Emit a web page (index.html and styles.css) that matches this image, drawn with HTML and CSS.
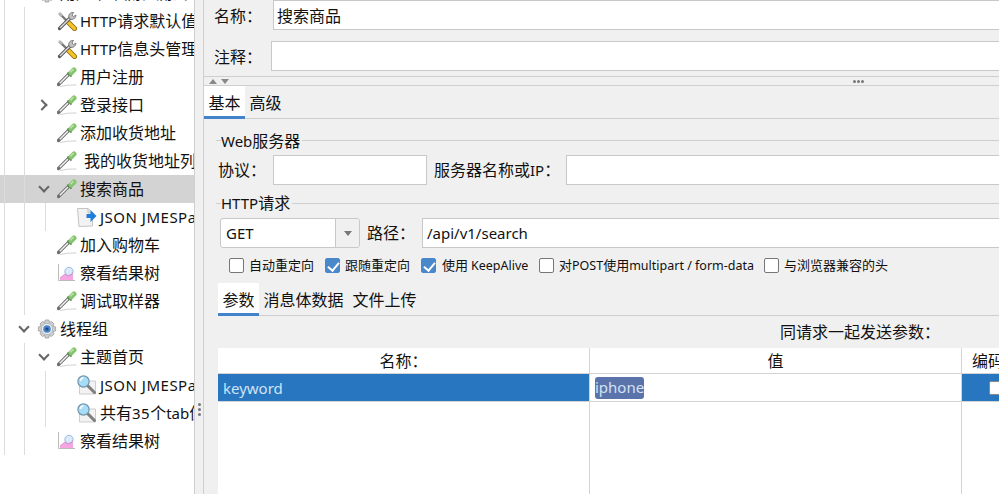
FILE: index.html
```html
<!DOCTYPE html>
<html lang="zh-CN">
<head>
<meta charset="utf-8">
<title>搜索商品</title>
<link rel="stylesheet" href="styles.css">
</head>
<body>
<svg class="defs" width="0" height="0" aria-hidden="true">
  <symbol id="i-drop" viewBox="0 0 20 20">
    <path d="M3 19.5Q10 17.6 19.5 18" fill="none" stroke="#d0d0d0" stroke-width="1"/>
    <path d="M1.5 17.5L11 8" stroke="#6e6e6e" stroke-width="3.2" stroke-linecap="round"/>
    <path d="M2.8 16.2L11 8" stroke="#f2f2f2" stroke-width="1.5"/>
    <path d="M10.5 5.5L14.5 9.5" stroke="#4f7d48" stroke-width="1.8"/>
    <path d="M14 6L17 3" stroke="#86c56e" stroke-width="5" stroke-linecap="round"/>
    <path d="M14 4.8L16.2 2.4" stroke="#c0e6ae" stroke-width="1.4" stroke-linecap="round"/>
  </symbol>
  <symbol id="i-tools" viewBox="0 0 20 20">
    <path d="M3 3L11 11" stroke="#777" stroke-width="2.4"/>
    <path d="M2 2L5 5" stroke="#b4b4b4" stroke-width="3"/>
    <path d="M11 11L17.5 17.5" stroke="#8a6a10" stroke-width="5" stroke-linecap="round"/>
    <path d="M11 11L17.5 17.5" stroke="#f5c423" stroke-width="3.2" stroke-linecap="round"/>
    <path d="M2.5 17.5L13 7" stroke="#555" stroke-width="3.2" stroke-linecap="round"/>
    <path d="M3 17L13 7" stroke="#dedede" stroke-width="1.4"/>
    <path d="M16.5 1.5A4 4 0 0 0 12 7L14 8.5A4.5 4.5 0 0 0 19 4L16.5 5.5L15 4Z" fill="#c0c0c0" stroke="#6a6a6a" stroke-width=".8"/>
  </symbol>
  <symbol id="i-chart" viewBox="0 0 20 20">
    <path d="M1.5 1V17.5H18" fill="none" stroke="#bcbcbc"/>
    <path d="M3 17V15L8 11L11 13L16 10V17Z" fill="#f6a6e0"/>
    <circle cx="12" cy="8.5" r="4.2" fill="#dce9f8" stroke="#8fb4dc" stroke-width=".9"/>
    <path d="M3 15L8 11L11 13L16 10" fill="none" stroke="#d884c4" stroke-width=".8"/>
  </symbol>
  <symbol id="i-gear" viewBox="0 0 20 20">
    <path d="M8.2 1H11.8L12.3 3.6L14.4 2.4L17 5L15.8 7.1L18.6 7.9V11.9L15.8 12.6L17 14.9L14.4 17.5L12.3 16.3L11.8 19H8.2L7.7 16.3L5.6 17.5L3 14.9L4.2 12.6L1.4 11.9V7.9L4.2 7.1L3 5L5.6 2.4L7.7 3.6Z" fill="#cfcfcf" stroke="#9a9a9a" stroke-width=".8"/>
    <circle cx="10" cy="10" r="5.6" fill="#eef1f5" stroke="#a4aebb" stroke-width=".8"/>
    <circle cx="10" cy="10" r="3.8" fill="#4a82c0"/>
    <circle cx="10" cy="10" r="1.6" fill="#1a4c8a"/>
  </symbol>
  <symbol id="i-lens" viewBox="0 0 20 20">
    <path d="M2.5 6H18.5V19H2.5Z" fill="#f2f2f2" stroke="#cdcdcd"/>
    <path d="M11 11L17.5 17.5" stroke="#7e7e7e" stroke-width="3" stroke-linecap="round"/>
    <circle cx="6.5" cy="6.5" r="5.6" fill="#a6dcf6" stroke="#6f94ac" stroke-width="1.2"/>
    <path d="M3.4 6A3.2 3.2 0 0 1 6.5 3" fill="none" stroke="#fff" stroke-width="1.4"/>
  </symbol>
  <symbol id="i-post" viewBox="0 0 20 20">
    <path d="M.5 1.5H11L15.5 6V19L2 19.5Z" fill="#f2f2f2" stroke="#c4c4c4"/>
    <path d="M11 1.5V6H15.5" fill="#e0e0e0" stroke="#c4c4c4"/>
    <path d="M9.5 7H13.5V3L19.5 9L13.5 15V11H9.5Z" fill="#1f7fd8"/>
  </symbol>
</svg>

<div class="app">
  <nav class="tree">
    <div class="rootline">
      <div class="row lv1"><svg class="ic"><use href="#i-gear"/></svg><span class="tx">用户下单流程测试</span></div>
      <div class="branch">
        <div class="row lv2"><svg class="ic"><use href="#i-tools"/></svg><span class="tx"><span class="la">HTTP</span>请求默认值</span></div>
        <div class="row lv2"><svg class="ic"><use href="#i-tools"/></svg><span class="tx"><span class="la">HTTP</span>信息头管理器</span></div>
        <div class="row lv2"><svg class="ic"><use href="#i-drop"/></svg><span class="tx">用户注册</span></div>
        <div class="row lv2"><span class="chev right"></span><svg class="ic"><use href="#i-drop"/></svg><span class="tx">登录接口</span></div>
        <div class="row lv2"><svg class="ic"><use href="#i-drop"/></svg><span class="tx">添加收货地址</span></div>
        <div class="row lv2"><svg class="ic"><use href="#i-drop"/></svg><span class="tx tx-shift">我的收货地址列表</span></div>
        <div class="row lv2 sel"><span class="chev down"></span><svg class="ic"><use href="#i-drop"/></svg><span class="tx">搜索商品</span></div>
        <div class="branch short">
          <div class="row lv3"><svg class="ic"><use href="#i-post"/></svg><span class="tx"><span class="la wide">JSON JMESPath Extractor</span></span></div>
        </div>
        <div class="row lv2"><svg class="ic"><use href="#i-drop"/></svg><span class="tx">加入购物车</span></div>
        <div class="row lv2"><svg class="ic"><use href="#i-chart"/></svg><span class="tx">察看结果树</span></div>
        <div class="row lv2"><svg class="ic"><use href="#i-drop"/></svg><span class="tx">调试取样器</span></div>
      </div>
      <div class="row lv1"><span class="chev down"></span><svg class="ic"><use href="#i-gear"/></svg><span class="tx">线程组</span></div>
      <div class="branch">
        <div class="row lv2"><span class="chev down"></span><svg class="ic"><use href="#i-drop"/></svg><span class="tx">主题首页</span></div>
        <div class="branch short">
          <div class="row lv3"><svg class="ic"><use href="#i-lens"/></svg><span class="tx"><span class="la wide">JSON JMESPath Extractor</span></span></div>
          <div class="row lv3"><svg class="ic"><use href="#i-lens"/></svg><span class="tx">共有<span class="la wide">35</span>个<span class="la">tab</span>值</span></div>
        </div>
        <div class="row lv2"><svg class="ic"><use href="#i-chart"/></svg><span class="tx">察看结果树</span></div>
      </div>
    </div>
  </nav>

  <div class="vsplit"><i></i><i></i><i></i></div>

  <main class="detail">
    <div class="namerow">
      <label class="lb lb-name">名称：</label>
      <div class="field">搜索商品</div>
    </div>
    <div class="namerow note">
      <label class="lb lb-note">注释：</label>
      <div class="field"></div>
    </div>

    <div class="hsplit">
      <span class="tri up"></span><span class="tri dn"></span>
      <span class="dots"><i></i><i></i><i></i></span>
    </div>

    <div class="tabs main-tabs">
      <span class="tab on">基本</span><span class="tab">高级</span>
    </div>

    <section class="group web">
      <div class="legend"><span><span class="la">Web</span>服务器</span></div>
      <div class="line">
        <label class="lb lb-proto">协议：</label>
        <div class="field proto"></div>
        <label class="lb lb-host">服务器名称或<span class="la">IP</span>：</label>
        <div class="field grow"></div>
      </div>
    </section>

    <section class="group http">
      <div class="legend"><span><span class="la">HTTP</span>请求</span></div>
      <div class="line req">
        <div class="combo"><span class="combo-val la">GET</span><span class="combo-btn"></span></div>
        <label class="lb lb-path">路径：</label>
        <div class="field grow path la">/api/v1/search</div>
      </div>
    </section>

    <div class="checks">
      <span class="ck c1"><span class="box"></span>自动重定向</span>
      <span class="ck c2"><span class="box on"></span>跟随重定向</span>
      <span class="ck c3"><span class="box on wider"></span>使用 <span class="la12">KeepAlive</span></span>
      <span class="ck c4"><span class="box"></span>对<span class="la12">POST</span>使用<span class="la12">multipart / form-data</span></span>
      <span class="ck c5"><span class="box"></span>与浏览器兼容的头</span>
    </div>

    <div class="tabs sub-tabs">
      <span class="tab on">参数</span><span class="tab">消息体数据</span><span class="tab">文件上传</span>
    </div>

    <div class="caption">同请求一起发送参数：</div>

    <div class="table">
      <div class="th">名称：</div>
      <div class="th">值</div>
      <div class="th last">编码？</div>
      <div class="td blue la">keyword</div>
      <div class="td"><span class="mark la">iphone</span></div>
      <div class="td blue last center"><span class="tick"></span></div>
      <div class="fill"></div>
      <div class="fill"></div>
      <div class="fill last"></div>
    </div>
  </main>
</div>
</body>
</html>
```

FILE: styles.css
```css
* { box-sizing: border-box; }
html, body { margin: 0; height: 100%; overflow: hidden; background: #f0f0f0; }
body { font: 16px/1.2 "Noto Sans CJK SC", "Noto Sans", sans-serif; color: #111; }
.defs { position: absolute; }
.la { font: 15px "Noto Sans", "Noto Sans CJK SC", sans-serif; }
.la12 { font: 12.5px "Noto Sans", "Noto Sans CJK SC", sans-serif; }
.wide { letter-spacing: .5px; }

.app { display: flex; height: 494px; overflow: hidden; }

/* tree */
.tree { flex: 0 0 195px; background: #fff; border-right: 1px solid #cfcfcf; overflow: hidden; isolation: isolate; }
.rootline { margin: -21px 0 0 4px; border-left: 1px solid #dcdcdc; }
.branch { margin-left: 19px; border-left: 1px solid #dcdcdc; }
.branch.short { margin-left: 20px; }
.row { position: relative; display: flex; align-items: center; height: 28px; white-space: nowrap; }
.row.lv1 { padding-left: 32px; }
.row.lv2 { padding-left: 32px; }
.row.lv3 { padding-left: 31px; }
.row.sel::before { content: ""; position: absolute; z-index: -1; inset: 0 0 0 -40px; background: #d3d3d3; }
.ic { flex: none; width: 20px; height: 20px; margin-right: 3px; }
.tx-shift { padding-left: 4px; }
.chev { position: absolute; left: 14px; top: 10px; width: 8px; height: 8px; border: solid #666; border-width: 0 2px 2px 0; }
.chev.right { transform: rotate(-45deg); left: 13px; }
.chev.down { transform: rotate(45deg); top: 8px; left: 15px; }

/* splitters */
.vsplit { flex: 0 0 8px; display: flex; flex-direction: column; align-items: center; gap: 2px; padding-top: 403px; }
.vsplit i, .dots i { display: block; width: 3px; height: 3px; border-radius: 50%; background: #777; }

.detail { flex: 1; min-width: 0; display: flex; flex-direction: column; border-left: 1px solid #cfcfcf; overflow: hidden; }
.namerow { display: flex; flex: none; height: 30px; align-items: stretch; }
.namerow.note { margin-top: 11px; }
.field { flex: 1; min-width: 0; margin-right: -6px; padding: 2px 3px 0; background: #fff; border: 1px solid #c8c8c8; display: flex; align-items: center; }
.lb { flex: none; display: flex; align-items: center; }
.namerow .lb { padding-top: 2px; }
.lb-name { width: 69px; padding-left: 10px; }
.lb-note { width: 67px; padding-left: 10px; }

.hsplit { flex: none; position: relative; display: flex; align-items: center; height: 10px; margin-top: 5px; border: solid #cfcfcf; border-width: 1px 0; padding-left: 5px; gap: 4px; }
.tri { width: 0; height: 0; border: 4px solid transparent; }
.tri.up { border-top: 0; border-bottom: 5px solid #888; }
.tri.dn { border-bottom: 0; border-top: 5px solid #888; }
.dots { display: flex; gap: 1px; margin-left: 620px; }

.tabs { flex: none; display: flex; height: 33px; border-bottom: 1px solid #cfcfcf; }
.tab { display: flex; align-items: center; height: 33px; padding: 1px 4.5px 0; }
.tab.on { background: #fff; box-shadow: inset 0 -3px 0 #4283c9; }
.main-tabs { padding-left: 0; }

.group { flex: none; padding-left: 12px; }
.legend { display: flex; align-items: center; height: 22px; }
.legend::before { content: ""; flex: 0 0 5px; height: 1px; background: #cfcfcf; }
.legend::after { content: ""; flex: 1; height: 1px; background: #cfcfcf; }
.legend > span { padding-right: 2px; }
.web { margin-top: 10px; }
.web .legend > span { padding-top: 2px; }
.line { display: flex; height: 30px; }
.web .line { margin-top: 4px; padding-left: 2px; }
.lb-proto { width: 55px; }
.field.proto { flex: 0 0 154px; margin-right: 7px; }
.lb-host { width: 132px; }
.http { margin-top: 7px; }
.req { margin-top: 4px; padding-left: 4px; height: 30px; }

.combo { flex: 0 0 140px; display: flex; background: #fff; border: 1px solid #c8c8c8; border-radius: 3px; }
.combo-val { flex: 1; padding-left: 5px; display: flex; align-items: center; border-right: 1px solid #c8c8c8; }
.combo-btn { flex: 0 0 23px; display: flex; align-items: center; justify-content: center; background: #f0f0f0; border-radius: 0 3px 3px 0; }
.combo-btn::after { content: ""; border: 4.5px solid transparent; border-top: 5px solid #777; border-bottom: 0; }
.lb-path { width: 62px; padding-left: 7px; }
.path { padding: 0 4px; }

.checks { flex: none; display: flex; align-items: center; height: 28px; margin-top: 3px; padding-left: 25px; font-size: 13px; }
.ck { display: flex; align-items: center; flex: none; white-space: pre; }
.box { flex: none; width: 15px; height: 15px; margin-right: 5px; background: #fff; border: 1px solid #777; border-radius: 2px; position: relative; }
.box.wider { margin-right: 6px; }
.box.on { background: #4a88cc; border-color: #4a88cc; }
.box.on::after { content: ""; position: absolute; left: 4px; top: 1px; width: 5px; height: 9px; border: solid #fff; border-width: 0 2px 2px 0; transform: rotate(40deg); }
.c1 { width: 96px; }
.c2 { width: 96px; }
.c3 { width: 118px; }
.c4 { width: 225px; }

.sub-tabs { margin-top: 4px; margin-left: 14px; }

.caption { flex: none; height: 32px; display: flex; align-items: center; padding-left: 576px; white-space: nowrap; }

.table { flex: 1; min-height: 0; margin-left: 14px; display: grid; grid-template-columns: 372px 372px 68px; grid-template-rows: 26px 28px 1fr; background: #fff; }
.th { display: flex; align-items: center; justify-content: center; border: solid #d4d4d4; border-width: 0 1px 1px 0; white-space: nowrap; overflow: hidden; }
.td { display: flex; align-items: center; height: 28px; border: solid #d4d4d4; border-width: 0 1px 1px 0; padding-left: 5px; }
.td.blue { background: #2776bf; color: #cfe3f5; border-right-color: #d4d4d4; }
.td.center { justify-content: center; padding: 0; }
.fill { border-right: 1px solid #d4d4d4; }
.last { border-right: 0; }
.mark { display: inline-block; height: 22px; line-height: 21px; background: #5b73ab; color: #d3e2f2; border-radius: 3px; }
.tick { width: 14px; height: 14px; background: #fff; border: 1px solid #8a8a8a; border-radius: 2px; }
```
